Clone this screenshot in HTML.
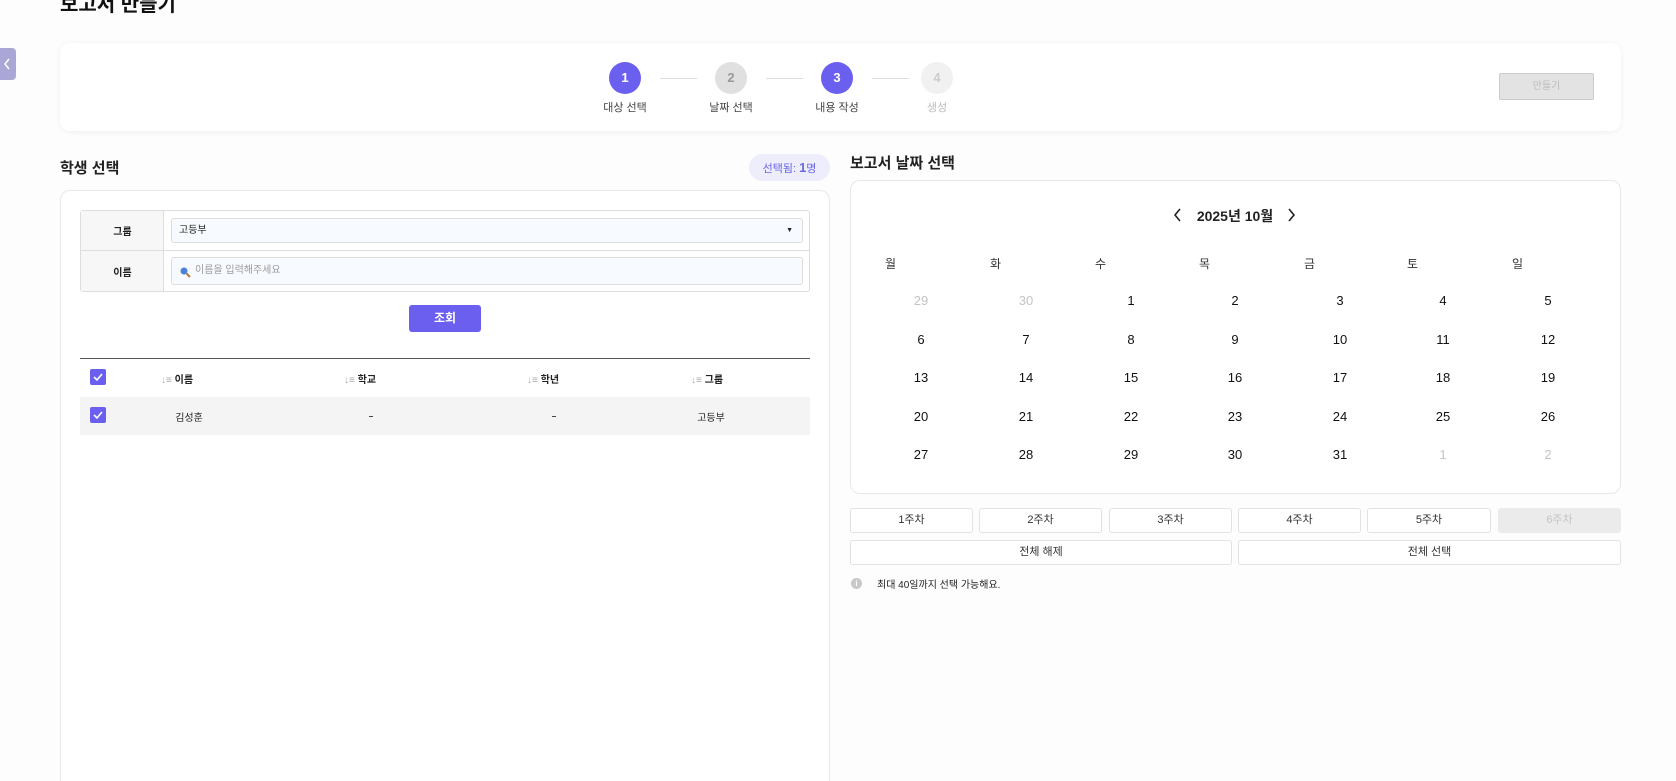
<!DOCTYPE html>
<html style="height:781px;overflow:hidden"><head><meta charset="utf-8"><style>
*{box-sizing:border-box;margin:0;padding:0}
body{width:1676px;height:781px;overflow:hidden;background:#fdfdfd;font-family:"Liberation Sans","Noto Sans CJK KR",sans-serif;color:#222;position:relative}
.a{position:absolute}
.c{text-align:center}
.card{background:#fff;border-radius:10px}
.circ{width:32px;height:32px;border-radius:50%;color:#fff;font-weight:bold;font-size:13px;line-height:32px;text-align:center}
.lbl{font-size:11px;color:#444;width:80px;text-align:center}
.wk{height:25px;border:1px solid #e2e2e2;border-radius:3px;background:#fff;font-size:11px;line-height:23px;text-align:center;color:#333}
.cb{width:16px;height:16px;background:#6b5ff0;border-radius:2px}
.num{width:60px;text-align:center;font-size:13px;color:#111}
</style></head><body>
<div class="a" style="left:60px;top:-12px;font-size:20px;font-weight:bold;color:#111">보고서 만들기</div>
<div class="a" style="left:0;top:48px;width:16px;height:32px;background:#aaa7d6;border-radius:0 4px 4px 0"><svg width="16" height="32"><path d="M9 11 L5 16 L9 21" stroke="#fff" stroke-width="1.5" fill="none"/></svg></div>

<div class="a card" style="left:60px;top:43px;width:1561px;height:88px;box-shadow:0 1px 6px rgba(0,0,0,0.06)"></div>
<div class="a" style="left:660px;top:78px;width:37px;height:1px;background:#ddd"></div>
<div class="a" style="left:766px;top:78px;width:37px;height:1px;background:#ddd"></div>
<div class="a" style="left:872px;top:78px;width:37px;height:1px;background:#ddd"></div>
<div class="a circ" style="left:609px;top:62px;background:#6b5ff0">1</div>
<div class="a circ" style="left:715px;top:62px;background:#e0e0e0;color:#999">2</div>
<div class="a circ" style="left:821px;top:62px;background:#6b5ff0">3</div>
<div class="a circ" style="left:921px;top:62px;background:#f1f1f1;color:#ccc">4</div>
<div class="a lbl" style="left:585px;top:99px">대상 선택</div>
<div class="a lbl" style="left:691px;top:99px">날짜 선택</div>
<div class="a lbl" style="left:797px;top:99px">내용 작성</div>
<div class="a lbl" style="left:897px;top:99px;color:#bbb">생성</div>
<div class="a" style="left:1499px;top:73px;width:95px;height:27px;background:#e3e3e3;border:1px solid #ccc;border-radius:2px;font-size:10px;color:#bbb;text-align:center;line-height:25px">만들기</div>

<div class="a" style="left:60px;top:157px;font-size:15px;font-weight:bold">학생 선택</div>
<div class="a" style="left:749px;top:154px;width:81px;height:27px;border-radius:14px;background:#ededfc;color:#6b66e0;font-size:11px;line-height:27px;text-align:center">선택됨: <b style="font-size:13px">1</b>명</div>
<div class="a card" style="left:60px;top:190px;width:770px;height:600px;border:1px solid #e8e8e8"></div>
<div class="a" style="left:80px;top:210px;width:730px;height:82px;border:1px solid #ddd;border-radius:3px"></div>
<div class="a" style="left:81px;top:211px;width:83px;height:80px;background:#f7f7f7;border-right:1px solid #ddd"></div>
<div class="a" style="left:81px;top:250px;width:728px;height:1px;background:#ddd"></div>
<div class="a c" style="left:81px;top:223px;width:83px;font-size:10px;font-weight:bold">그룹</div>
<div class="a c" style="left:81px;top:264px;width:83px;font-size:10px;font-weight:bold">이름</div>
<div class="a" style="left:171px;top:218px;width:632px;height:25px;background:#f7fafe;border:1px solid #ddd;border-radius:3px;font-size:10px;line-height:23px;padding-left:7px">고등부<span style="position:absolute;right:9px;top:0;font-size:7px">▼</span></div>
<div class="a" style="left:171px;top:257px;width:632px;height:28px;background:#f7fafe;border:1px solid #ddd;border-radius:3px;font-size:10px;line-height:26px;padding-left:23px;color:#999"><svg class="a" style="left:7px;top:8px" width="12" height="12"><circle cx="5" cy="5" r="3.5" fill="#4a80d8"/><path d="M7.5 7.5 L11 11" stroke="#b87a3a" stroke-width="2"/></svg>이름을 입력해주세요</div>
<div class="a" style="left:409px;top:305px;width:72px;height:27px;background:#6b5ff0;border-radius:3px;color:#fff;font-size:12px;font-weight:bold;text-align:center;line-height:27px">조회</div>
<div class="a" style="left:80px;top:358px;width:730px;height:1px;background:#555"></div>
<div class="a cb" style="left:90px;top:369px"><svg width="16" height="16"><path d="M4 8 L7 11 L12 5" stroke="#fff" stroke-width="1.6" fill="none"/></svg></div>
<div class="a" style="left:80px;top:397px;width:730px;height:38px;background:#f4f4f4"></div>
<div class="a cb" style="left:90px;top:407px"><svg width="16" height="16"><path d="M4 8 L7 11 L12 5" stroke="#fff" stroke-width="1.6" fill="none"/></svg></div>
<div class="a" style="left:161px;top:371px;font-size:10px;font-weight:bold"><span style="color:#aaa;font-weight:normal">↓≡</span> 이름</div>
<div class="a" style="left:344px;top:371px;font-size:10px;font-weight:bold"><span style="color:#aaa;font-weight:normal">↓≡</span> 학교</div>
<div class="a" style="left:527px;top:371px;font-size:10px;font-weight:bold"><span style="color:#aaa;font-weight:normal">↓≡</span> 학년</div>
<div class="a" style="left:691px;top:371px;font-size:10px;font-weight:bold"><span style="color:#aaa;font-weight:normal">↓≡</span> 그룹</div>
<div class="a c" style="left:159px;top:409px;width:60px;font-size:10px">김성훈</div>
<div class="a" style="left:369px;top:416px;width:4px;height:1px;background:#444"></div>
<div class="a" style="left:552px;top:416px;width:4px;height:1px;background:#444"></div>
<div class="a c" style="left:681px;top:409px;width:60px;font-size:10px">고등부</div>

<div class="a" style="left:850px;top:152px;font-size:15px;font-weight:bold">보고서 날짜 선택</div>
<div class="a card" style="left:850px;top:180px;width:771px;height:314px;border:1px solid #e8e8e8"></div>
<svg class="a" style="left:1172px;top:207px" width="12" height="16"><path d="M8 2 L3 8 L8 14" stroke="#222" stroke-width="1.6" fill="none"/></svg>
<div class="a" style="left:1190px;top:206px;width:90px;font-size:14px;font-weight:bold;text-align:center">2025년 10월</div>
<svg class="a" style="left:1285px;top:207px" width="12" height="16"><path d="M4 2 L9 8 L4 14" stroke="#222" stroke-width="1.6" fill="none"/></svg>
<div id="cal"></div>
<script>
var xs=[921,1026,1131,1235,1340,1443,1548],wd=["월","화","수","목","금","토","일"],ys=[301,340,378,417,455];
var h="";
for(var i=0;i<7;i++)h+='<div class="a" style="left:'+(xs[i]-36)+'px;top:255px;font-size:12px;color:#333">'+wd[i]+'</div>';
var d=[29,30];for(var k=1;k<=31;k++)d.push(k);d.push(1,2);
for(var r=0;r<5;r++)for(var c=0;c<7;c++){var n=r*7+c,g=(n<2||n>32);h+='<div class="a num" style="left:'+(xs[c]-30)+'px;top:'+(ys[r]-8)+'px;color:'+(g?'#c4c4c4':'#111')+'">'+d[n]+'</div>';}
document.getElementById("cal").innerHTML=h;
</script>
<div class="a wk" style="left:850px;top:508px;width:123px">1주차</div>
<div class="a wk" style="left:979px;top:508px;width:123px">2주차</div>
<div class="a wk" style="left:1109px;top:508px;width:123px">3주차</div>
<div class="a wk" style="left:1238px;top:508px;width:123px">4주차</div>
<div class="a wk" style="left:1367px;top:508px;width:124px">5주차</div>
<div class="a wk" style="left:1498px;top:508px;width:123px;background:#ebebeb;border-color:#ebebeb;color:#c4c4c4">6주차</div>
<div class="a wk" style="left:850px;top:540px;width:382px">전체 해제</div>
<div class="a wk" style="left:1238px;top:540px;width:383px">전체 선택</div>
<div class="a" style="left:851px;top:578px;width:11px;height:11px;border-radius:50%;background:#c8c8c8;color:#fff;font-size:8px;line-height:11px;text-align:center;font-weight:bold">i</div>
<div class="a" style="left:877px;top:576px;font-size:10px;color:#222">최대 40일까지 선택 가능해요.</div>
</body></html>
